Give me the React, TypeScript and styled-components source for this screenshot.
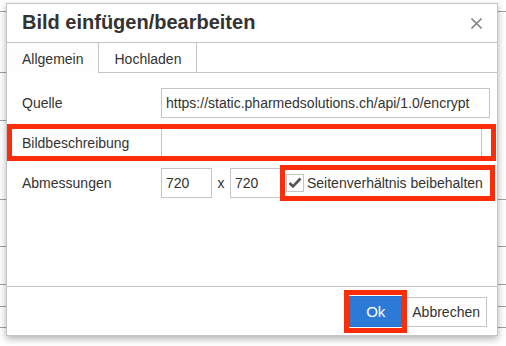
import React from 'react';
import styled, { createGlobalStyle } from 'styled-components';

const GlobalStyle = createGlobalStyle`
  html, body {
    margin: 0;
    padding: 0;
    background: #fff;
  }

  body {
    font-family: 'Liberation Sans', Arial, Helvetica, sans-serif;
    color: #333;
  }

  * {
    box-sizing: border-box;
  }
`;

const Page = styled.div`
  position: relative;
  width: 506px;
  height: 346px;
  overflow: hidden;
  background: #fff;
`;

// table rows of the page behind the dialog
const Backdrop = styled.div`
  display: flex;
  flex-direction: column;
`;

const BackdropRow = styled.div<{ $h: number; $leftOnly?: boolean }>`
  position: relative;
  height: ${(props) => props.$h + 1}px;

  &::after {
    content: '';
    position: absolute;
    left: 0;
    bottom: 0;
    height: 1px;
    width: ${(props) => (props.$leftOnly ? '20px' : '100%')};
    background: #a0a0a0;
  }
`;

const Dialog = styled.div`
  position: absolute;
  left: 6px;
  top: 3px;
  width: 492px;
  height: 333px;

  display: flex;
  flex-direction: column;

  background: #fff;
  border: 1px solid #c5c5c5;
  box-shadow: 0 3px 7px rgba(0, 0, 0, 0.3);
`;

const Head = styled.div`
  display: flex;
  justify-content: space-between;
  align-items: center;
  padding: 8px 15px 10px;
  border-bottom: 1px solid #c5c5c5;

  h1 {
    margin: 0;
    font-size: 20px;
    line-height: 20px;
    font-weight: bold;
    color: #333;
  }
`;

const CloseButton = styled.div`
  display: flex;
  width: 11px;
  height: 11px;
  margin-top: 2px;

  svg {
    display: block;
  }
`;

const Tabs = styled.div`
  display: flex;
  border-bottom: 1px solid #c5c5c5;
`;

const Tab = styled.div<{ $active?: boolean }>`
  padding: 8px 15px ${(props) => (props.$active ? '6px' : '5px')};
  margin-bottom: ${(props) => (props.$active ? '-1px' : '0')};
  font-size: 14px;
  line-height: 16px;
  color: #333;
  background: ${(props) => (props.$active ? '#fdfdfd' : '#fff')};
  border-right: 1px solid #c5c5c5;
`;

const Body = styled.div`
  flex: 1;
  display: flex;
  flex-direction: column;
  gap: 10px;
  padding: 15px 7px 0 15px;
`;

const FormRow = styled.div`
  position: relative;
  display: flex;
  align-items: center;
  height: 30px;
`;

const Label = styled.label`
  width: 139px;
  flex-shrink: 0;
  font-size: 14px;
  color: #333;
`;

const TextInput = styled.div<{ $width: number }>`
  width: ${(props) => props.$width}px;
  height: 30px;
  padding: 0 4px;
  display: flex;
  align-items: center;
  overflow: hidden;
  white-space: nowrap;

  font-size: 14px;
  color: #333;
  background: #fff;
  border: 1px solid #c5c5c5;
`;

const Times = styled.span`
  width: 18px;
  text-align: center;
  font-size: 14px;
  color: #333;
`;

const CheckGroup = styled.div`
  position: relative;
  display: flex;
  align-items: center;
  gap: 3px;
  margin-left: 5px;
  font-size: 14px;
  color: #333;
  white-space: nowrap;
`;

const CheckBox = styled.div`
  width: 18px;
  height: 18px;
  display: flex;
  align-items: center;
  justify-content: center;
  border: 1px solid #c5c5c5;
  background: #fff;
`;

// red annotation frame drawn over a part of the screenshot
const Mark = styled.div<{ $t: number; $r: number; $b: number; $l: number }>`
  position: absolute;
  top: ${(props) => props.$t}px;
  right: ${(props) => props.$r}px;
  bottom: ${(props) => props.$b}px;
  left: ${(props) => props.$l}px;
  border: 5px solid #fb2d0a;
  pointer-events: none;
`;

const Foot = styled.div`
  height: 49px;
  display: flex;
  justify-content: flex-end;
  align-items: center;
  gap: 4px;
  padding: 1px 10px 0;
  border-top: 1px solid #c5c5c5;
`;

const ButtonSlot = styled.div`
  position: relative;
  display: flex;
`;

const PrimaryButton = styled.button`
  width: 53px;
  height: 31px;
  padding: 0;
  border: 1px solid #2a73cc;
  background: #2d7ad6;
  color: #fff;
  font-family: inherit;
  font-size: 15px;
`;

const Button = styled.button`
  height: 30px;
  padding: 0 6px 0 5px;
  border: 1px solid #c5c5c5;
  background: #fff;
  color: #333;
  font-family: inherit;
  font-size: 14px;
`;

const App = () => {
  return (
    <Page>
      <GlobalStyle />
      <Backdrop>
        <BackdropRow $h={11} />
        <BackdropRow $h={60} $leftOnly />
        <BackdropRow $h={47} $leftOnly />
        <BackdropRow $h={78} />
        <BackdropRow $h={46} />
        <BackdropRow $h={37} />
        <BackdropRow $h={21} />
        <BackdropRow $h={20} />
      </Backdrop>

      <Dialog>
        <Head>
          <h1>Bild einfügen/bearbeiten</h1>
          <CloseButton>
            <svg width="11" height="11" viewBox="0 0 11 11">
              <path d="M0.5 0.5 L10.5 10.5 M10.5 0.5 L0.5 10.5" stroke="#8a8a8a" strokeWidth="1.6" />
            </svg>
          </CloseButton>
        </Head>

        <Tabs>
          <Tab $active>Allgemein</Tab>
          <Tab>Hochladen</Tab>
        </Tabs>

        <Body>
          <FormRow>
            <Label>Quelle</Label>
            <TextInput $width={329}>https://static.pharmedsolutions.ch/api/1.0/encrypt</TextInput>
          </FormRow>

          <FormRow>
            <Label>Bildbeschreibung</Label>
            <TextInput $width={321} />
            <Mark $t={-4} $r={-6} $b={-3} $l={-15} />
          </FormRow>

          <FormRow>
            <Label>Abmessungen</Label>
            <TextInput $width={51}>720</TextInput>
            <Times>x</Times>
            <TextInput $width={51}>720</TextInput>
            <CheckGroup>
              <CheckBox>
                <svg width="14" height="12" viewBox="0 0 14 12">
                  <path d="M1.5 6 L5 9.5 L12.5 1.5" fill="none" stroke="#555" strokeWidth="2.6" />
                </svg>
              </CheckBox>
              Seitenverhältnis beibehalten
              <Mark $t={-9} $r={-12} $b={-9} $l={-6} />
            </CheckGroup>
          </FormRow>
        </Body>

        <Foot>
          <ButtonSlot>
            <PrimaryButton>Ok</PrimaryButton>
            <Mark $t={-6} $r={-5} $b={-6} $l={-5} />
          </ButtonSlot>
          <Button>Abbrechen</Button>
        </Foot>
      </Dialog>
    </Page>
  );
};

export default App;
